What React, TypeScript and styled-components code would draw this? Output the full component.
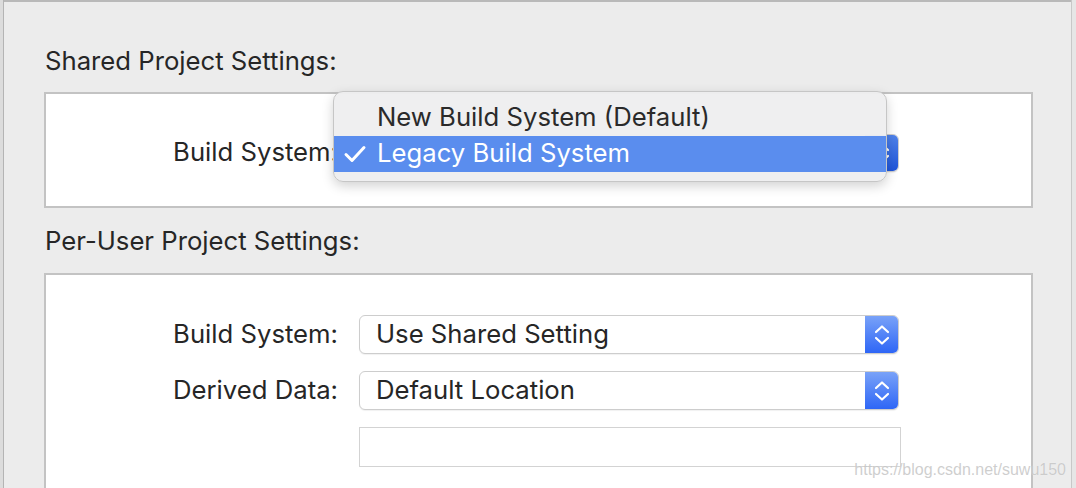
import styled, { createGlobalStyle } from "styled-components";

const GlobalStyle = createGlobalStyle`
  html, body {
    margin: 0;
    padding: 0;
    background: #ececec;
  }
  body {
    font-family: Inter, "Liberation Sans", Arial, sans-serif;
    color: #262626;
  }
`;

const Window = styled.div`
  position: relative;
  display: flex;
  width: 1076px;
  height: 488px;
  overflow: hidden;
  background: #ececec;
`;

const LeftEdge = styled.div`
  width: 3px;
  flex-shrink: 0;
  background: #dcdcdc;
  border-right: 1px solid #b4b4b4;
`;

const RightEdge = styled.div`
  width: 4px;
  flex-shrink: 0;
  background: #e6e6e6;
  border-left: 1px solid #c8c8c8;
`;

const Main = styled.main`
  flex: 1;
  border-top: 2px solid #b9b9b9;
  padding: 44px 38px 0 40px;
  display: flex;
  flex-direction: column;
`;

const Heading = styled.h2<{ $gap: number; $top?: number }>`
  margin: ${(p) => p.$top ?? 0}px 0 ${(p) => p.$gap}px 1px;
  font-size: 25.7px;
  font-weight: 400;
  line-height: 30px;
  color: #262626;
`;

const Section = styled.section<{ $pad: string }>`
  background: #fff;
  border: 2px solid #c3c3c3;
  padding: ${(p) => p.$pad};
  display: grid;
  grid-template-columns: 292px 540px;
  column-gap: 21px;
  row-gap: 17px;
  align-items: center;
  flex-shrink: 0;
`;

const Label = styled.label`
  justify-self: end;
  font-size: 25.7px;
  line-height: 36px;
  margin-top: -2px;
  color: #262626;
  white-space: nowrap;
`;

const PopupWrap = styled.div`
  position: relative;
`;

const Popup = styled.div<{ $h: number }>`
  display: flex;
  align-items: stretch;
  height: ${(p) => p.$h}px;
  box-sizing: border-box;
  background: #fff;
  border: 1px solid #cdcdcd;
  border-radius: 6px;
  box-shadow: 0 1px 1px rgba(0, 0, 0, 0.06);
  overflow: hidden;
`;

const PopupText = styled.span`
  flex: 1;
  display: flex;
  align-items: center;
  padding: 0 0 2px 16px;
  font-size: 25.7px;
  color: #262626;
  white-space: nowrap;
`;

const Stepper = styled.span<{ $pressed?: boolean }>`
  width: 33px;
  display: flex;
  align-items: center;
  justify-content: center;
  background: ${(p) =>
    p.$pressed
      ? "linear-gradient(#4f82ea, #1f55d9)"
      : "linear-gradient(#79a2f8, #2e66f6)"};
`;

const TextField = styled.div`
  width: 542px;
  height: 40px;
  box-sizing: border-box;
  border: 1px solid #d3d3d3;
  background: #fff;
`;

const Menu = styled.div`
  position: absolute;
  left: -26px;
  top: -43px;
  width: 554px;
  box-sizing: border-box;
  padding: 8px 0 9px;
  background: rgba(238, 238, 239, 0.97);
  border: 1px solid #c6c6c6;
  border-radius: 10px;
  box-shadow: 0 4px 12px rgba(0, 0, 0, 0.18);
  z-index: 2;
`;

const MenuItem = styled.div<{ $active?: boolean }>`
  position: relative;
  height: 36px;
  display: flex;
  align-items: center;
  padding: 0 0 3px 43px;
  box-sizing: border-box;
  font-size: 25.7px;
  color: ${(p) => (p.$active ? "#fff" : "#2a2a2a")};
  background: ${(p) => (p.$active ? "#5a8dee" : "transparent")};
  white-space: nowrap;
`;

const Check = styled.svg`
  position: absolute;
  left: 9px;
  top: 9px;
`;

const Watermark = styled.div`
  position: absolute;
  right: 10px;
  bottom: 9px;
  font-family: "Liberation Sans", Arial, sans-serif;
  font-size: 16px;
  color: rgba(190, 190, 190, 0.75);
  text-shadow: 0 0 1px rgba(255, 255, 255, 0.6);
  z-index: 3;
`;

function Chevrons() {
  return (
    <svg width="18" height="24" viewBox="0 0 18 24" fill="none">
      <path d="M3 9 L9 3.5 L15 9" stroke="#fff" strokeWidth="2.2" strokeLinecap="round" strokeLinejoin="round" />
      <path d="M3 15 L9 20.5 L15 15" stroke="#fff" strokeWidth="2.2" strokeLinecap="round" strokeLinejoin="round" />
    </svg>
  );
}

function App() {
  return (
    <Window>
      <GlobalStyle />
      <LeftEdge />
      <Main>
        <Heading $gap={16}>Shared Project Settings:</Heading>
        <Section $pad="40px 0 34px">
          <Label>Build System:</Label>
          <PopupWrap>
            <Popup $h={38}>
              <PopupText>Legacy Build System</PopupText>
              <Stepper $pressed>
                <Chevrons />
              </Stepper>
            </Popup>
            <Menu>
              <MenuItem>New Build System (Default)</MenuItem>
              <MenuItem $active>
                <Check width="24" height="18" viewBox="0 0 24 18" fill="none">
                  <path d="M3 9.5 L9 15.5 L21 2.5" stroke="#fff" strokeWidth="3" strokeLinecap="round" strokeLinejoin="round" />
                </Check>
                Legacy Build System
              </MenuItem>
            </Menu>
          </PopupWrap>
        </Section>
        <Heading $gap={17} $top={18}>Per-User Project Settings:</Heading>
        <Section $pad="40px 0 60px">
          <Label>Build System:</Label>
          <Popup $h={39}>
            <PopupText>Use Shared Setting</PopupText>
            <Stepper>
              <Chevrons />
            </Stepper>
          </Popup>
          <Label>Derived Data:</Label>
          <Popup $h={39}>
            <PopupText>Default Location</PopupText>
            <Stepper>
              <Chevrons />
            </Stepper>
          </Popup>
          <span />
          <TextField />
        </Section>
      </Main>
      <RightEdge />
      <Watermark>https://blog.csdn.net/suwu150</Watermark>
    </Window>
  );
}

export default App;
